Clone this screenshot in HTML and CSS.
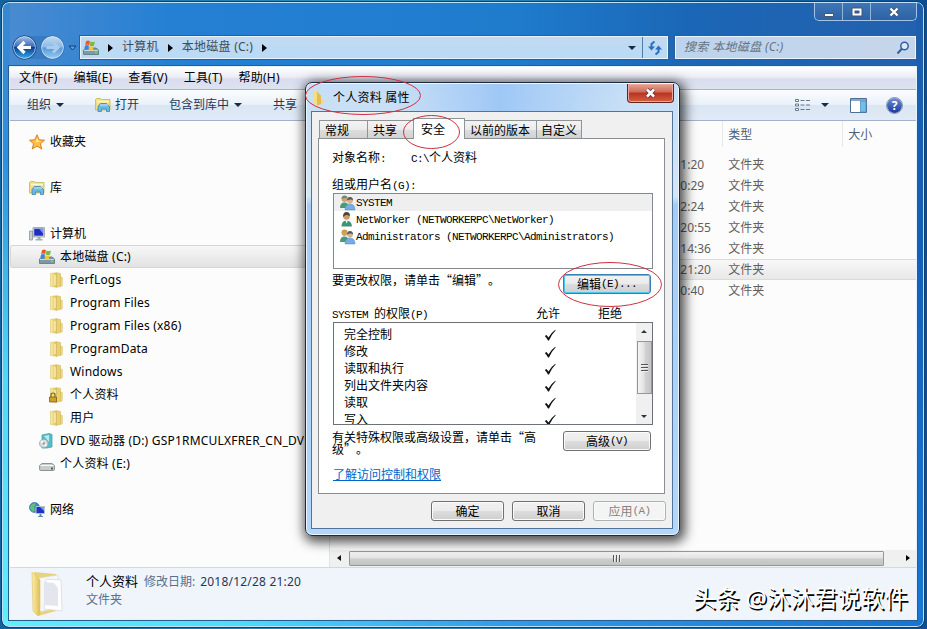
FILE: index.html
```html
<!DOCTYPE html>
<html lang="zh-CN">
<head>
<meta charset="UTF-8">
<meta name="viewport" content="width=device-width, initial-scale=1.0">
<title>个人资料 属性</title>
<link rel="stylesheet" href="styles.css">
</head>
<body>

<!-- shared icons -->
<svg class="defs" width="0" height="0">
    <defs>
        <linearGradient id="gold" x1="0" x2="1" y1="0" y2="0">
            <stop offset="0" stop-color="#fbf0a8"/><stop offset="1" stop-color="#e0bd55"/>
        </linearGradient>
        <linearGradient id="ball" x1="0" x2="0" y1="0" y2="1">
            <stop offset="0" stop-color="#a9c6e8"/><stop offset=".45" stop-color="#3b6db8"/>
            <stop offset=".5" stop-color="#0c3a8c"/><stop offset="1" stop-color="#35b5f5"/>
        </linearGradient>
        <linearGradient id="ball2" x1="0" x2="0" y1="0" y2="1">
            <stop offset="0" stop-color="#c5dcf3"/><stop offset=".48" stop-color="#8cb8e4"/>
            <stop offset=".52" stop-color="#5a99d6"/><stop offset="1" stop-color="#9ad0f5"/>
        </linearGradient>
    </defs>
    <symbol id="folder" viewBox="0 0 16 16">
        <path d="M1.500 1.500l6-.8v14.600l-6-1z" fill="url(#gold)" stroke="#d9c069" stroke-width=".6"/>
        <path d="M7.500.8l4 .7v12.800l-4 1z" fill="#e9d070" stroke="#cfae4b" stroke-width=".5"/>
        <path d="M11.500 5l1.800.6v8l-1.800.8z" fill="#f3dc85" stroke="#cfae4b" stroke-width=".5"/>
        <path d="M6 3v10" stroke="#fffbe0"/>
    </symbol>
    <symbol id="drive" viewBox="0 0 16 16">
        <path d="M2 10l2-2h9l2.500 2v4.500H.5V10z" fill="#7f98a5" stroke="#4f6976" stroke-width=".7"/>
        <path d="M1 10.500h14" stroke="#c9d7dd"/>
        <path d="M12 12.500h2" stroke="#5bea5a" stroke-width="1.300"/>
        <path d="M3 1.200q2.200-1.400 4 0l-.9 4q-1.900-1.200-4 0z" fill="#e8582c"/>
        <path d="M7.500 1.500q2.200 1.200 4.500 0l-1 4q-2.200 1-4.400 0z" fill="#7cba3c"/>
        <path d="M2 5.700q2.100-1.200 4 0l-.9 4q-1.900-1.100-4 0z" fill="#3b86d8"/>
        <path d="M6.500 6q2.200 1.200 4.400 0l-1 4q-2.200 1-4.300 0z" fill="#f6c52f"/>
    </symbol>
    <symbol id="library" viewBox="0 0 16 16">
        <path d="M.5 2.500l1-1h4l1 1h8.500v10.500H.5z" fill="#f0df86" stroke="#c8b457" stroke-width=".8"/>
        <path d="M2 4.500h12" stroke="#fdf8cf" stroke-width="1.500"/>
        <path d="M3 14.500V9.500l2.500-3h6l3 3v5h-3v-2.500h-5v2.500z" fill="#6db9e2" stroke="#3b86b8" stroke-width=".8"/>
        <path d="M5 8h8" stroke="#c7ebfa"/>
    </symbol>
    <symbol id="people" viewBox="0 0 16 16">
        <circle cx="5" cy="4" r="2.900" fill="#d0a36b"/>
        <path d="M2 4q0-3.500 3-3.500t3 2.500q-3-.5-6 1z" fill="var(--hair, #708a72)"/>
        <path d="M.5 13q0-5.500 4.500-5.500t4 5.500z" fill="#4a9a78"/>
        <circle cx="10.500" cy="5.500" r="2.900" fill="#d9b28a"/>
        <path d="M7.500 5.500q0-3.500 3-3.500t3 3.500q-2-2-6 0z" fill="#4c5a66"/>
        <path d="M5.500 15q0-6 5-6t5 6z" fill="#76abe3" stroke="#4f86c2" stroke-width=".5"/>
    </symbol>
    <symbol id="person" viewBox="0 0 16 16">
        <circle cx="7" cy="4.500" r="3.300" fill="#d59a63"/>
        <path d="M3.500 5q0-5 3.500-5t3.500 4q-3-1.500-4-1t-3 2z" fill="#4d4637"/>
        <path d="M2 14.500q0-6 5-6t5.500 6z" fill="#3f9277"/>
        <path d="M6 8.500l1.200 3 1.200-3z" fill="#fff"/>
    </symbol>
    <symbol id="check" viewBox="0 0 12 12">
        <path d="M.8 7l1.700-1 2 2.500Q7.500 3.500 11.300.8l.4.500Q8 5 5 11.500H4Q2.800 9 .8 7z" fill="#111"/>
    </symbol>
</svg>

<div class="desktop">
    <div class="explorer">
        <div class="caption">
            <div class="window-buttons">
                <span class="wb"><svg width="12" height="12"><path d="M1.500 7.500h9v3h-9z" fill="#fff" stroke="#45566d"/></svg></span>
                <span class="wb"><svg width="12" height="12"><path d="M2.500 3.500h7v5h-7z" fill="none" stroke="#45566d" stroke-width="4"/><path d="M2.500 3.500h7v5h-7z" fill="#345b90" stroke="#fff" stroke-width="2"/></svg></span>
                <span class="wb wide"><svg width="12" height="12"><path d="M2.500 2.500l7 7m0-7l-7 7" stroke="#45566d" stroke-width="4"/><path d="M2.500 2.500l7 7m0-7l-7 7" stroke="#fff" stroke-width="2.300"/></svg></span>
            </div>
        </div>

        <div class="navbar">
            <svg class="travel" width="68" height="28" viewBox="0 0 68 28">
                <path d="M14 2h30q8 0 8 11t-8 12H14z" fill="#2f6fb5" opacity=".55"/>
                <circle cx="14.500" cy="13.500" r="11.700" fill="url(#ball)" stroke="#123d78"/>
                <circle cx="14.500" cy="13.500" r="10.900" fill="none" stroke="#c5ddf5" stroke-width=".8"/>
                <path d="M21 13.500H9M14.500 8L9 13.500l5.500 5.500" fill="none" stroke="#fff" stroke-width="3.200"/>
                <circle cx="42.500" cy="13.500" r="11.700" fill="url(#ball2)" stroke="#2d66a8"/>
                <circle cx="42.500" cy="13.500" r="10.900" fill="none" stroke="#d5e8fa" stroke-width=".8"/>
                <path d="M36.500 13.500h11M43 8.500l5 5-5 5" fill="none" stroke="#a9cdee" stroke-width="3"/>
                <path d="M59 12h7l-3.500 4z" fill="#5ea2e0" stroke="#0f3f7e"/>
            </svg>
            <div class="address">
                <svg width="16" height="16"><use href="#drive"/></svg>
                <i class="arrow-right"></i><span class="crumb">计算机</span>
                <i class="arrow-right"></i><span class="crumb">本地磁盘 (C:)</span>
                <i class="arrow-right"></i>
                <i class="arrow-down addr-drop"></i>
                <span class="refresh"><svg width="16" height="16" viewBox="0 0 16 16"><path d="M7.500 1.500L4.500 4v4" fill="none" stroke="#2a6fc0" stroke-width="2"/><path d="M1 6.500h7l-3.500 4z" fill="#2a6fc0"/><path d="M8.500 14.500l3-2.500V8" fill="none" stroke="#2a6fc0" stroke-width="2"/><path d="M8 9.500h7L11.500 5.500z" fill="#2a6fc0"/></svg></span>
            </div>
            <div class="search">
                <span>搜索 本地磁盘 (C:)</span>
                <svg width="14" height="14" viewBox="0 0 14 14"><circle cx="8.500" cy="5" r="3.700" fill="#dceaf8" stroke="#2b62ab" stroke-width="1.500"/><path d="M5.800 7.800L1.500 12.500" stroke="#2b62ab" stroke-width="2"/></svg>
            </div>
        </div>

        <div class="client">
            <div class="menubar">
                <span>文件(F)</span><span>编辑(E)</span><span>查看(V)</span><span>工具(T)</span><span>帮助(H)</span>
            </div>
            <div class="toolbar">
                <span class="tool t1">组织<i class="arrow-down"></i></span>
                <span class="tool t2"><svg width="16" height="16"><use href="#library"/></svg>打开</span>
                <span class="tool t3">包含到库中<i class="arrow-down"></i></span>
                <span class="tool t4">共享</span>
                <div class="tool-right">
                    <svg width="16" height="14" viewBox="0 0 16 14"><path d="M.5 1.500h3v2h-3zM.5 6h3v2h-3zM.5 10.500h3v2h-3z" fill="#fff" stroke="#67788d"/><path d="M5.500 2.500h4m1.500 0h4M5.500 7h4M11 7h4m-9.500 4.500h4m1.500 0h4" stroke="#67788d"/></svg>
                    <i class="arrow-down"></i>
                    <svg class="preview" width="17" height="15" viewBox="0 0 17 15"><path d="M.5.500h16v14H.5z" fill="#fff" stroke="#4d6f97"/><path d="M1 2h15" stroke="#87a6c8" stroke-width="2"/><path d="M10.500 3h5.500v11h-5.500z" fill="#6fc0e8" stroke="#4d8dbb" stroke-width=".7"/></svg>
                    <span class="help">?</span>
                </div>
            </div>

            <div class="main">
                <div class="tree">
                    <div class="node"><svg width="16" height="16" viewBox="0 0 16 16"><path d="M8 .8l2.200 5 5.300.4-4.100 3.500 1.400 5.300L8 12.100 3.200 15l1.400-5.300L.5 6.200l5.300-.4z" fill="#fbc14a" stroke="#dc7d1e"/><path d="M8 3.500l1.300 3.300 3 .3-5.300 1z" fill="#fff0b0"/></svg>收藏夹</div>
                    <div class="node gap"><svg width="16" height="16"><use href="#library"/></svg>库</div>
                    <div class="node gap"><svg width="16" height="16" viewBox="0 0 16 16"><path d="M.5 5h3v9h-3z" fill="#c6ced3" stroke="#7e8c94" stroke-width=".7"/><path d="M4 1.500h11.500v9.500H4z" fill="#d3dade" stroke="#8b979f" stroke-width=".7"/><path d="M5.200 2.700h9v7h-9z" fill="#1c2fc0"/><path d="M10 2.700h4.200v5z" fill="#7c8ff0"/><path d="M8.500 11h3v2h2v1.500H6.500V13h2z" fill="#a2afb7"/></svg>计算机</div>
                    <div class="node l1 selected"><svg width="16" height="16"><use href="#drive"/></svg>本地磁盘 (C:)</div>
                    <div class="node l2"><svg width="16" height="16"><use href="#folder"/></svg>PerfLogs</div>
                    <div class="node l2"><svg width="16" height="16"><use href="#folder"/></svg>Program Files</div>
                    <div class="node l2"><svg width="16" height="16"><use href="#folder"/></svg>Program Files (x86)</div>
                    <div class="node l2"><svg width="16" height="16"><use href="#folder"/></svg>ProgramData</div>
                    <div class="node l2"><svg width="16" height="16"><use href="#folder"/></svg>Windows</div>
                    <div class="node l2"><svg width="16" height="16"><use href="#folder"/><path d="M2 10V8q0-2 2-2t2 2v2" fill="none" stroke="#7f6217" stroke-width="1.200"/><path d="M.5 10h7v5h-7z" fill="#d19f27" stroke="#80601a" stroke-width=".8"/></svg>个人资料</div>
                    <div class="node l2"><svg width="16" height="16"><use href="#folder"/></svg>用户</div>
                    <div class="node l1"><svg width="16" height="16" viewBox="0 0 16 16"><path d="M3 2l7-1.500 3 1V14l-5 1H3z" fill="#58bfc8" stroke="#379aa5" stroke-width=".7"/><path d="M5 3l5-1v7z" fill="#b5ecee"/><circle cx="4.800" cy="10.500" r="4.300" fill="#d8dde0" stroke="#8b979e" stroke-width=".7"/><path d="M2 8l5.500 5" stroke="#fff" stroke-width="1.500"/><circle cx="4.800" cy="10.500" r="1.200" fill="#8ea0aa"/></svg>DVD 驱动器 (D:) GSP1RMCULXFRER_CN_DVD</div>
                    <div class="node l1"><svg width="16" height="16" viewBox="0 0 16 16"><path d="M.6 9.500L3 7.500h10l2.400 2v4q0 1-1 1H1.600q-1 0-1-1z" fill="#c9cccd" stroke="#777d80" stroke-width=".8"/><path d="M1.500 9.500h13" stroke="#f9f9f9"/><path d="M12 12.500h2" stroke="#367b2c" stroke-width="2"/></svg>个人资料 (E:)</div>
                    <div class="node gap"><svg width="16" height="16" viewBox="0 0 16 16"><circle cx="5.500" cy="5.500" r="5" fill="#3489cd" stroke="#23609b" stroke-width=".6"/><path d="M2 3q3-3 5-1l-2 3 1 3-2 2q-3-2-3-5z" fill="#63c16d"/><path d="M7 4.500h8.500v7H7z" fill="#1c33c4" stroke="#b5c3d3"/><path d="M11 5h4v4z" fill="#7e97f2"/><path d="M10.500 12v2H9v1h5v-1h-1.500v-2z" fill="#6988ae"/></svg>网络</div>
                </div>
                <div class="files">
                    <div class="file-row head"><span></span><span>类型</span><span>大小</span></div>
                    <div class="file-row"><span>1:20</span><span>文件夹</span></div>
                    <div class="file-row"><span>0:29</span><span>文件夹</span></div>
                    <div class="file-row"><span>2:24</span><span>文件夹</span></div>
                    <div class="file-row"><span>20:55</span><span>文件夹</span></div>
                    <div class="file-row"><span>14:36</span><span>文件夹</span></div>
                    <div class="file-row active"><span>21:20</span><span>文件夹</span></div>
                    <div class="file-row"><span>0:40</span><span>文件夹</span></div>
                    <div class="hscroll">
                        <i class="arrow-left"></i>
                        <div class="hthumb"><i></i><i></i><i></i></div>
                        <i class="arrow-right small"></i>
                    </div>
                </div>
            </div>

            <div class="details">
                <svg width="36" height="48" viewBox="0 0 36 48">
                    <path d="M4 2l22 2v37L8 46z" fill="#e9d27a"/>
                    <path d="M9 8l19-3v33l-19 4z" fill="#f7f7f9" stroke="#d5d5da" stroke-width=".6"/>
                    <path d="M16 9l15 1 1 31-18-2z" fill="#fff" stroke="#d4d5dc" stroke-width=".7"/>
                    <path d="M14 12l10 1 4 5v18l-14-1z" fill="#e4e6ee"/>
                    <path d="M2 2l8 8v34l-2 2-5-5z" fill="url(#gold)" stroke="#dcc26a" stroke-width=".6"/>
                </svg>
                <div class="details-text">
                    <div class="line"><b>个人资料</b><span class="label">修改日期:</span><span class="date">2018/12/28 21:20</span></div>
                    <div class="label">文件夹</div>
                </div>
                <div class="watermark">头条 @沐沐君说软件</div>
            </div>
        </div>
    </div>

    <div class="dialog">
        <div class="dialog-title">
            <svg width="16" height="16" viewBox="0 0 16 16"><path d="M2 1l4-.5v14.500l-4-1.500z" fill="#f7de7c"/><path d="M6 1.500l4 4V14l-4 1.500z" fill="#e3bd4d"/><path d="M10 8l4 4-4 2z" fill="#f0d68a"/></svg>
            <span>个人资料 属性</span>
            <div class="close"><svg width="13" height="12" viewBox="0 0 13 12"><path d="M3 2.500l7 7m0-7l-7 7" stroke="#64303a" stroke-width="4.400"/><path d="M3 2.500l7 7m0-7l-7 7" stroke="#fff" stroke-width="2.600"/></svg></div>
        </div>
        <div class="dialog-body">
            <div class="tabs">
                <span class="tab w1">常规</span><span class="tab w2">共享</span><span class="tab current">安全</span><span class="tab w3">以前的版本</span><span class="tab w4">自定义</span>
            </div>
            <div class="panel">
                <div class="object"><span>对象名称<em>:</em></span><span><em>C:\</em>个人资料</span></div>
                <div class="group-label">组或用户名<em>(G):</em></div>
                <div class="userlist">
                    <div class="user on"><svg width="17" height="16"><use href="#people"/></svg><em>SYSTEM</em></div>
                    <div class="user"><svg width="17" height="16"><use href="#person"/></svg><em>NetWorker (NETWORKERPC\NetWorker)</em></div>
                    <div class="user gold"><svg width="17" height="16"><use href="#people"/></svg><em>Administrators (NETWORKERPC\Administrators)</em></div>
                </div>
                <div class="edit-row"><span>要更改权限，请单击<q>“</q>编辑<q>”</q>。</span><div class="btn focus">编辑<em>(E)...</em></div></div>
                <div class="perm-head"><span><em>SYSTEM </em>的权限<em>(P)</em></span><span>允许</span><span>拒绝</span></div>
                <div class="perms">
                    <div class="perm-rows">
                        <div class="perm"><span>完全控制</span><svg width="12" height="12"><use href="#check"/></svg></div>
                        <div class="perm"><span>修改</span><svg width="12" height="12"><use href="#check"/></svg></div>
                        <div class="perm"><span>读取和执行</span><svg width="12" height="12"><use href="#check"/></svg></div>
                        <div class="perm"><span>列出文件夹内容</span><svg width="12" height="12"><use href="#check"/></svg></div>
                        <div class="perm"><span>读取</span><svg width="12" height="12"><use href="#check"/></svg></div>
                        <div class="perm"><span>写入</span><svg width="12" height="12"><use href="#check"/></svg></div>
                    </div>
                    <div class="vscroll">
                        <i class="arrow-up"></i>
                        <div class="vthumb"><i></i><i></i><i></i></div>
                        <i class="arrow-down small"></i>
                    </div>
                </div>
                <div class="adv-row"><span>有关特殊权限或高级设置，请单击<q>“</q>高<br>级<q>”</q>。</span><div class="btn">高级<em>(V)</em></div></div>
                <a class="learn">了解访问控制和权限</a>
            </div>
            <div class="actions">
                <div class="btn">确定</div><div class="btn">取消</div><div class="btn disabled">应用<em>(A)</em></div>
            </div>
        </div>
    </div>

    <!-- red pen marks over the dialog -->
    <svg class="marks" width="927" height="629" fill="none" stroke="#cf2f42" stroke-width="1">
        <ellipse cx="363" cy="95.500" rx="57.500" ry="19"/>
        <ellipse cx="431.500" cy="132" rx="28" ry="16.500"/>
        <ellipse cx="610" cy="284.500" rx="51.500" ry="22"/>
    </svg>
</div>

</body>
</html>
```
FILE: styles.css
```css
* {
    box-sizing: border-box;
}
body {
    margin: 0;
    font-family: "Noto Sans", "Noto Sans CJK SC", sans-serif;
    font-size: 12px;
    line-height: 16px;
    color: #000;
    overflow: hidden;
}
svg {
    display: block;
    flex: none;
}
.defs {
    position: absolute;
}
.desktop {
    position: relative;
    width: 927px;
    height: 629px;
    padding: 2px 3px 2px 2px;
    overflow: hidden;
    background: linear-gradient(90deg, #14629e 0, #2a93bd 40%, #0c4e94 100%);
}

/* explorer window */
.explorer {
    display: flex;
    flex-direction: column;
    height: 625px;
    padding: 0 6px 6px;
    border: 1px solid #bfe0f5;
    outline: 1px solid #123f6c;
    border-radius: 7px;
    background:
        linear-gradient(90deg, #65edfb 0, #50dcf8 25%, #2f9bea 55%, #1674d2 100%) 0 100% / 100% 8px no-repeat,
        linear-gradient(180deg, #3a86d0 0, #2e90dc 25%, #4fd9f5 60%, #5cf0fa 100%) 0 100% / 7px 100% no-repeat,
        linear-gradient(180deg, #1d5fae 0, #1560b8 40%, #1a78d6 100%) 100% 100% / 7px 100% no-repeat,
        linear-gradient(90deg, #4b8bd0 0, #2580d4 18%, #1f7ccd 55%, #1b66b6 75%, #2361ad 100%);
}
.caption {
    display: flex;
    justify-content: flex-end;
    height: 31px;
}
.window-buttons {
    display: flex;
    width: 103px;
    height: 18px;
    border: 1px solid #a3c4e6;
    border-top: 0;
    border-radius: 0 0 5px 5px;
    background: linear-gradient(#3f76b6, #2b63a6);
}
.wb {
    display: flex;
    justify-content: center;
    align-items: center;
    width: 28px;
    border-right: 1px solid #93b5da;
}
.wb.wide {
    flex: 1;
    border-right: 0;
}
.navbar {
    display: flex;
    height: 32px;
    padding-left: 1px;
}
.travel {
    margin-right: 2px;
}
.address, .search {
    display: flex;
    align-items: center;
    height: 23px;
    margin-top: 2px;
    border: 1px solid #e8f4fd;
    outline: 1px solid #2a5f98;
    background: linear-gradient(#c2daf0, #b9daf6);
    color: #3f4c5a;
}
.address {
    width: 588px;
    padding-left: 2px;
}
.address .arrow-right {
    margin: 0 9px 0 9px;
}
.crumb {
    margin-top: -2px;
    letter-spacing: .25px;
    white-space: nowrap;
}
.address .addr-drop {
    margin-left: auto;
    margin-right: 6px;
}
.refresh {
    display: flex;
    align-items: center;
    justify-content: center;
    width: 25px;
    height: 21px;
    border-left: 1px solid #4e7cab;
}
.search {
    justify-content: space-between;
    width: 241px;
    margin-left: 7px;
    padding: 0 5px 0 8px;
    background: linear-gradient(90deg, #bcd4ed, #c6d6ea);
    color: #66727f;
    font-style: italic;
    letter-spacing: .35px;
}
.search span {
    margin-top: -2px;
}
i {
    flex: none;
    font-style: normal;
}
.arrow-right, .arrow-left, .arrow-down, .arrow-up {
    display: inline-block;
    width: 0;
    height: 0;
    border: 4px solid transparent;
}
.arrow-right {
    border-left: 5px solid #000;
    border-right: 0;
}
.arrow-left {
    border: 3px solid transparent;
    border-right: 4px solid #111;
    border-left: 0;
}
.arrow-down {
    border-top: 4px solid #1b2b45;
    border-bottom: 0;
}
.arrow-up {
    border: 3px solid transparent;
    border-bottom: 3px solid #333;
    border-top: 0;
}
.arrow-down.small {
    border-width: 3px 3px 0;
    border-top-color: #333;
}
.arrow-right.small {
    border-width: 3px 0 3px 4px;
}

/* client area */
.client {
    display: flex;
    flex-direction: column;
    height: 554px;
    border: 1px solid #e6f3fb;
    outline: 1px solid #2a5c90;
    background: #fcfcfc;
}
.menubar {
    display: flex;
    gap: 16px;
    height: 22px;
    padding: 3px 9px 0;
    background: linear-gradient(#fff 0, #eceef6 45%, #dadded 55%, #dfe2f0 100%);
    letter-spacing: .2px;
}
.toolbar {
    display: flex;
    align-items: center;
    height: 32px;
    padding-left: 17px;
    border-top: 1px solid #a9b2c6;
    border-bottom: 1px solid #a2b2cb;
    background: linear-gradient(#fbfdff 0, #eaf1fa 48%, #dae5f3 52%, #e1ebf7 100%);
    color: #1e395b;
}
.tool {
    display: flex;
    align-items: center;
}
.tool .arrow-down {
    margin-left: 5px;
}
.t1 { width: 68px; }
.t2 { width: 74px; gap: 4px; }
.t3 { width: 104px; }
.tool-right {
    display: flex;
    align-items: center;
    margin-left: auto;
    padding-right: 14px;
}
.tool-right .arrow-down {
    margin: 0 21px 0 10px;
}
.help {
    width: 15px;
    height: 15px;
    margin-left: 20px;
    border-radius: 50%;
    outline: 1px solid #8292ad;
    background: linear-gradient(#6f8ed8, #17389c);
    color: #fff;
    font-weight: bold;
    line-height: 15px;
    text-align: center;
}
.main {
    display: flex;
    height: 446px;
}
.tree {
    width: 321px;
    padding-top: 9px;
    border-right: 1px solid #dde4ee;
    overflow: hidden;
}
.node {
    display: flex;
    align-items: center;
    gap: 5px;
    height: 23px;
    padding-left: 19px;
    white-space: nowrap;
}
.node.gap {
    margin-top: 23px;
}
.node.l1, .node.l2 {
    letter-spacing: .2px;
}
.node.l1 { padding-left: 29px; }
.node.l2 { padding-left: 39px; }
.node.selected {
    padding-left: 28px;
    border: 1px solid #d6d6d6;
    border-radius: 2px;
    background: linear-gradient(#f7f7f7, #e2e2e2);
}
.files {
    display: flex;
    flex-direction: column;
    width: 587px;
}
.file-row {
    display: grid;
    grid-template-columns: 48px 120px 1fr;
    align-items: center;
    height: 21px;
    padding-left: 350px;
    color: #5f5f5f;
}
.file-row.head {
    height: 26px;
    margin-bottom: 7px;
    padding-left: 343px;
    grid-template-columns: 50px 120px 1fr;
    color: #4c607a;
}
.file-row.head span {
    height: 26px;
    padding: 6px 0 0 5px;
    border-right: 1px solid #e3e8ee;
}
.file-row.head span:last-child {
    border: 0;
}
.file-row.active {
    border: solid #dadada;
    border-width: 1px 0;
    background: linear-gradient(#f8f8f8, #e8e8e8);
}
.hscroll {
    display: flex;
    align-items: center;
    height: 17px;
    margin-top: auto;
    padding: 0 6px 1px 7px;
    background: #f0f0f0;
}
.hthumb {
    display: flex;
    justify-content: center;
    align-items: center;
    gap: 1px;
    width: 535px;
    height: 15px;
    margin: 0 auto 0 8px;
    border: 1px solid #979797;
    border-radius: 1px;
    background: linear-gradient(#f3f3f3 0, #e2e2e2 48%, #cdcdcd 52%, #c3c3c3 100%);
}
.hthumb i {
    width: 2px;
    height: 7px;
    border-left: 1px solid #555;
    border-right: 1px solid #eee;
}
.details {
    display: flex;
    height: 52px;
    padding: 2px 8px 0 20px;
    border-top: 1px solid #cdd8e8;
    background: #f0f4fb;
}
.details-text {
    padding: 3px 0 0 20px;
    white-space: nowrap;
}
.line {
    height: 19px;
}
.line b {
    margin-right: 6px;
    font-size: 13px;
    font-weight: normal;
}
.label {
    color: #5a6f8c;
}
.date {
    margin-left: 5px;
    color: #1e395b;
    letter-spacing: .2px;
}
.watermark {
    margin: 14px 0 0 auto;
    font-size: 23.500px;
    line-height: 28px;
    white-space: nowrap;
    color: #fff;
    text-shadow: 1.500px 1.500px 0 #000;
}

/* properties dialog */
.dialog {
    position: absolute;
    left: 305px;
    top: 82px;
    width: 375px;
    height: 454px;
    padding: 1px 6px 6px 5px;
    border: 1px solid #1f2b38;
    border-radius: 7px;
    box-shadow: inset 0 0 0 1px #e9f5ff, 2px 3px 12px 3px rgba(0, 0, 0, .7);
    background:
        linear-gradient(90deg, rgba(159, 200, 246, 0) 0, #9fc8f6 45%, rgba(159, 200, 246, 0) 100%) 90px 0 / 230px 28px no-repeat,
        linear-gradient(#c6def6 0, #d5e5f5 25%, #a4cdf6 27%, #b3d7fb 100%);
    font-family: "Noto Sans CJK SC", sans-serif;
}
.dialog-title {
    display: flex;
    align-items: center;
    gap: 6px;
    height: 27px;
    font-family: "Noto Sans", "Noto Sans CJK SC", sans-serif;
    letter-spacing: .25px;
}
.close {
    display: flex;
    align-items: center;
    justify-content: center;
    align-self: flex-start;
    width: 47px;
    height: 19px;
    margin-left: auto;
    margin-right: -1px;
    border: 1px solid #64221f;
    border-top: 0;
    border-radius: 0 0 4px 4px;
    box-shadow: inset 0 0 0 1px #e9a89c;
    background: linear-gradient(#e6a393 0, #d06a57 45%, #b73321 50%, #d5603f 100%);
}
.dialog-body {
    height: 418px;
    padding: 6px 7px 0 6px;
    border: 1px solid #52749c;
    background: #f0f0f0;
}
.tabs {
    display: flex;
    align-items: flex-end;
    height: 20px;
    padding-left: 1px;
}
.tab {
    height: 18px;
    margin-right: -1px;
    padding-left: 5px;
    border: 1px solid #8f9499;
    border-bottom: 0;
    background: linear-gradient(#f3f3f3 0, #ebebeb 50%, #ddd 52%, #d2d2d2 100%);
    line-height: 18px;
    white-space: nowrap;
}
.w1 { width: 49px; }
.w2 { width: 47px; }
.w3 { width: 73px; }
.w4 { width: 46px; padding-left: 4px; }
.tab.current {
    position: relative;
    width: 52px;
    height: 21px;
    margin-bottom: -1px;
    padding-left: 7px;
    background: #fff;
    line-height: 20px;
}
.panel {
    height: 356px;
    padding: 10px 11px 0 13px;
    border: 1px solid #8a8e94;
    background: #fff;
}
em {
    font-family: "Liberation Mono", monospace;
    font-size: 11px;
    font-style: normal;
    letter-spacing: -.6px;
    white-space: pre;
}
q {
    display: inline-block;
    width: 12px;
    quotes: none;
    text-align: center;
}
q::before, q::after {
    content: none;
}
.object {
    display: flex;
    height: 27px;
}
.object span:first-child {
    width: 79px;
}
.group-label {
    height: 17px;
}
.userlist {
    width: 320px;
    height: 76px;
    margin-left: 1px;
    border: 1px solid #828790;
}
.user {
    display: flex;
    align-items: center;
    height: 17px;
    padding-left: 5px;
}
.user.on {
    background: #efefef;
}
.user.gold {
    --hair: #d49a34;
}
.edit-row {
    display: flex;
    justify-content: space-between;
    height: 36px;
    padding: 3px 2px 0 0;
}
.btn {
    display: flex;
    align-items: center;
    justify-content: center;
    width: 73px;
    height: 20px;
    border: 1px solid #707070;
    border-radius: 3px;
    box-shadow: inset 0 0 0 1px #fbfbfb;
    background: linear-gradient(#f2f2f2 0, #ebebeb 48%, #ddd 52%, #cfcfcf 100%);
}
.edit-row .btn, .adv-row .btn {
    width: 88px;
}
.edit-row .btn {
    margin-top: 2px;
}
.btn.focus {
    border-color: #3c7fb1;
    box-shadow: inset 0 0 0 1px #48c8f0;
}
.btn.disabled {
    border-color: #adb2b5;
    background: #f4f4f4;
    color: #838383;
}
.perm-head {
    display: grid;
    grid-template-columns: 204px 62px 1fr;
    height: 17px;
}
.perms {
    display: flex;
    width: 320px;
    height: 103px;
    margin-left: 1px;
    border: 1px solid #6d727a;
    overflow: hidden;
}
.perm-rows {
    width: 302px;
    padding-top: 2px;
}
.perm {
    display: flex;
    align-items: center;
    height: 17px;
    padding-left: 10px;
}
.perm span {
    width: 200px;
}
.perm svg {
    margin-top: 3px;
}
.vscroll {
    display: flex;
    flex-direction: column;
    align-items: center;
    width: 16px;
    padding: 7px 0 6px;
    background: #f0f0f0;
}
.vthumb {
    display: flex;
    flex-direction: column;
    justify-content: center;
    align-items: center;
    gap: 1px;
    width: 15px;
    height: 53px;
    margin: 8px 0 auto;
    border: 1px solid #979797;
    background: linear-gradient(90deg, #f3f3f3 0, #e2e2e2 48%, #d2d2d2 52%, #c5c5c5 100%);
}
.vthumb i {
    width: 7px;
    height: 2px;
    border-top: 1px solid #555;
    border-bottom: 1px solid #eee;
}
.adv-row {
    display: flex;
    justify-content: space-between;
    height: 41px;
    padding: 6px 2px 0 0;
    line-height: 12px;
}
.learn {
    margin-left: 1px;
    color: #0066cc;
    text-decoration: underline;
}
.actions {
    display: flex;
    gap: 8px;
    justify-content: flex-end;
    margin-right: -1px;
    padding-top: 7px;
}

.marks {
    position: absolute;
    left: 0;
    top: 0;
}
```
